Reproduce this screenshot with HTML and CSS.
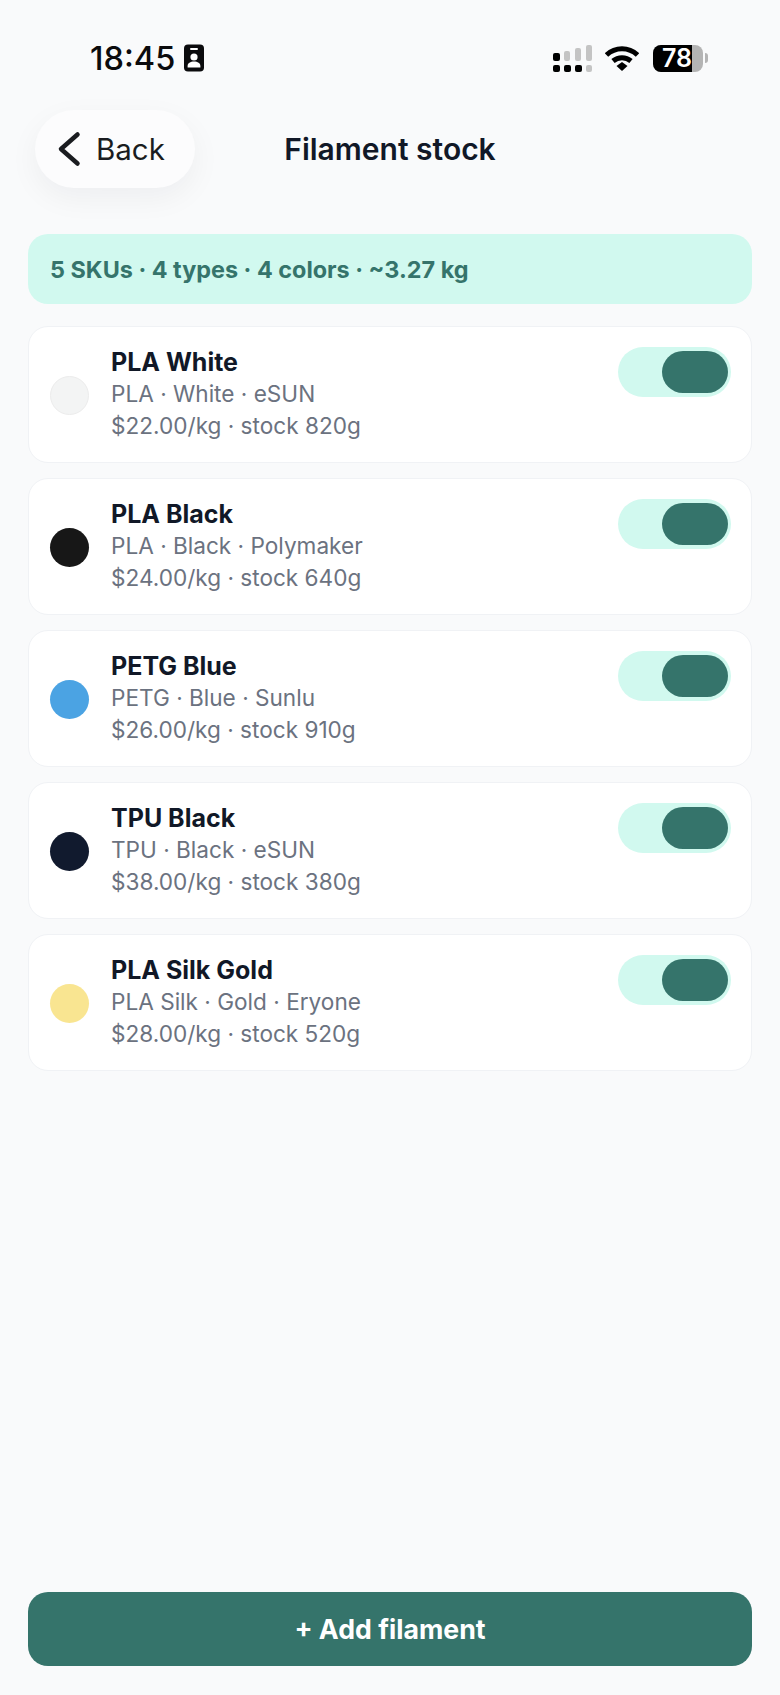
FILE: index.html
```html
<!DOCTYPE html>
<html lang="en">
<head>
    <meta charset="UTF-8">
    <meta name="viewport" content="width=device-width, initial-scale=1.0">
    <title>Filament stock</title>
    <link rel="stylesheet" href="styles.css">
</head>
<body>
    <div class="status-bar">
        <div class="status-left">
            <span class="time">18:45</span>
            <svg class="id-icon" width="20" height="27" viewBox="0 0 20 27"><rect width="20" height="27" rx="4" fill="#0b0b0d"/><rect x="6" y="3.500" width="8" height="2" rx="1" fill="#fff"/><circle cx="10" cy="12.500" r="3.600" fill="#fff"/><path d="M3.600 23v-1.600c0-2.800 2.800-4.400 6.400-4.400s6.400 1.600 6.400 4.400V23z" fill="#fff"/></svg>
        </div>
        <div class="status-right">
            <svg class="signal" width="39" height="27" viewBox="0 0 39 27"><rect x="0" y="8" width="7" height="8" rx="2" fill="#000"/><rect x="0" y="20" width="7" height="7" rx="2" fill="#000"/><rect x="11" y="6" width="6" height="10" rx="2" fill="#c4c4c4"/><rect x="11" y="20" width="7" height="7" rx="2" fill="#000"/><rect x="22" y="3" width="6" height="13" rx="2" fill="#c4c4c4"/><rect x="22" y="20" width="7" height="7" rx="2" fill="#000"/><rect x="33" y="0" width="6" height="16" rx="2" fill="#c4c4c4"/><rect x="33" y="20" width="6" height="7" rx="2" fill="#c4c4c4"/></svg>
            <svg class="wifi" width="34" height="26" viewBox="0 0 34 26"><path d="M1.500 10C10.300 1.700 23.700 1.700 32.500 10" fill="none" stroke="#000" stroke-width="5"/><path d="M8 16C13.200 11.500 20.800 11.500 26 16" fill="none" stroke="#000" stroke-width="5"/><path d="M11.500 21L17 17L22.500 21L17 26z" fill="#000"/></svg>
            <div class="battery">
                <div class="battery-body">
                    <span class="battery-fill"></span>
                    <span class="battery-num">78</span>
                </div>
                <span class="battery-cap"></span>
            </div>
        </div>
    </div>

    <div class="nav">
        <button class="back-btn">
            <svg width="24" height="36" viewBox="0 0 24 36"><path d="M20.500 3.500L4 18L20.500 32.500" fill="none" stroke="#1a1c20" stroke-width="4.500" stroke-linecap="round" stroke-linejoin="round"/></svg>
            <span>Back</span>
        </button>
        <h1 class="title">Filament stock</h1>
    </div>

    <div class="content">
        <div class="summary">5 SKUs · 4 types · 4 colors · ~3.27 kg</div>

        <div class="card">
            <span class="swatch swatch-white"></span>
            <div class="info">
                <div class="name">PLA White</div>
                <div class="meta">PLA · White · eSUN</div>
                <div class="meta">$22.00/kg · stock 820g</div>
            </div>
            <span class="toggle"><span class="knob"></span></span>
        </div>
        <div class="card">
            <span class="swatch swatch-black"></span>
            <div class="info">
                <div class="name">PLA Black</div>
                <div class="meta">PLA · Black · Polymaker</div>
                <div class="meta">$24.00/kg · stock 640g</div>
            </div>
            <span class="toggle"><span class="knob"></span></span>
        </div>
        <div class="card">
            <span class="swatch swatch-blue"></span>
            <div class="info">
                <div class="name">PETG Blue</div>
                <div class="meta">PETG · Blue · Sunlu</div>
                <div class="meta">$26.00/kg · stock 910g</div>
            </div>
            <span class="toggle"><span class="knob"></span></span>
        </div>
        <div class="card">
            <span class="swatch swatch-navy"></span>
            <div class="info">
                <div class="name">TPU Black</div>
                <div class="meta">TPU · Black · eSUN</div>
                <div class="meta">$38.00/kg · stock 380g</div>
            </div>
            <span class="toggle"><span class="knob"></span></span>
        </div>
        <div class="card">
            <span class="swatch swatch-gold"></span>
            <div class="info">
                <div class="name">PLA Silk Gold</div>
                <div class="meta">PLA Silk · Gold · Eryone</div>
                <div class="meta">$28.00/kg · stock 520g</div>
            </div>
            <span class="toggle"><span class="knob"></span></span>
        </div>
    </div>

    <button class="add-btn">+ Add filament</button>
</body>
</html>
```
FILE: styles.css
```css
*,
*::before,
*::after {
    box-sizing: border-box;
}

:root {
    --clr-bg: #f9fafb;
    --clr-dark: #111827;
    --clr-muted: #6b7280;
    --clr-primary: #35746b;
    --clr-mint: #d1f9ef;
    --clr-border: #f0f2f5;
}

body {
    display: flex;
    flex-direction: column;
    height: 1695px;
    margin: 0;
    background: var(--clr-bg);
    color: var(--clr-dark);
    font-family: "Inter", sans-serif;
    overflow: hidden;
}

/* status bar */
.status-bar {
    display: flex;
    justify-content: space-between;
    align-items: center;
    height: 58px;
    margin-top: 29px;
    padding: 0 72px 0 90px;
}

.status-left {
    display: flex;
    align-items: center;
    gap: 9px;
}

.time {
    font-size: 32.500px;
    font-weight: 500;
    color: #0b0b0d;
}

.id-icon {
    width: 20px;
    height: 28px;
}

.status-right {
    display: flex;
    align-items: center;
    gap: 14px;
}

.signal {
    margin-right: -1px;
}

.wifi {
    width: 34px;
    height: 26px;
}

.battery {
    display: flex;
    align-items: center;
    gap: 2px;
}

.battery-body {
    position: relative;
    display: flex;
    justify-content: flex-end;
    align-items: center;
    width: 50px;
    height: 27px;
    border-radius: 8px;
    background: #b4b4b4;
    overflow: hidden;
}

.battery-fill {
    position: absolute;
    top: 0;
    bottom: 0;
    left: 0;
    width: 78%;
    background: #000;
}

.battery-num {
    position: relative;
    color: #fff;
    font-size: 25px;
    font-weight: 600;
    margin-right: 11px;
}

.battery-cap {
    width: 3px;
    height: 10px;
    background: #b4b4b4;
    border-radius: 0 3px 3px 0;
}

/* nav */
.nav {
    position: relative;
    display: flex;
    align-items: center;
    justify-content: center;
    height: 78px;
    margin-top: 23px;
}

.back-btn {
    position: absolute;
    left: 35px;
    top: 0;
    display: flex;
    align-items: center;
    gap: 15px;
    width: 160px;
    height: 78px;
    padding: 0 0 0 22px;
    border: none;
    border-radius: 39px;
    background: #fcfcfd;
    box-shadow: 0 10px 30px rgba(17, 24, 39, 0.05);
    color: #1a1c20;
    font-family: inherit;
    font-size: 29.500px;
}

.title {
    margin: 0;
    font-size: 30px;
    font-weight: 600;
}

/* list */
.content {
    display: flex;
    flex-direction: column;
    gap: 15px;
    margin-top: 46px;
    padding: 0 28px;
}

.summary {
    display: flex;
    align-items: center;
    height: 70px;
    margin-bottom: 7px;
    padding: 0 22px;
    border-radius: 20px;
    background: var(--clr-mint);
    color: var(--clr-primary);
    font-size: 23.400px;
    font-weight: 700;
}

.card {
    display: flex;
    align-items: center;
    height: 137px;
    padding: 0 20px 1px 21px;
    border: 1px solid var(--clr-border);
    border-radius: 20px;
    background: #fff;
}

.swatch {
    flex: none;
    width: 39px;
    height: 39px;
    border-radius: 50%;
    margin-top: 2px;
}

.swatch-white {
    background: #f3f4f4;
    border: 1px solid #ececec;
}

.swatch-black {
    background: #171717;
}

.swatch-blue {
    background: #4ba3e3;
}

.swatch-navy {
    background: #111a2e;
}

.swatch-gold {
    background: #f9e591;
}

.info {
    flex: 1;
    margin-left: 22px;
}

.name {
    padding-top: 1px;
    font-size: 25px;
    font-weight: 700;
    line-height: 31px;
}

.meta {
    color: var(--clr-muted);
    font-size: 22.600px;
    line-height: 32px;
}

.toggle {
    display: flex;
    justify-content: flex-end;
    align-items: center;
    align-self: flex-start;
    width: 113px;
    height: 50px;
    margin-top: 20px;
    padding-right: 3px;
    border-radius: 25px;
    background: var(--clr-mint);
}

.knob {
    width: 66px;
    height: 42px;
    border-radius: 21px;
    background: var(--clr-primary);
}

.add-btn {
    height: 74px;
    margin: auto 28px 29px;
    border: none;
    border-radius: 20px;
    background: var(--clr-primary);
    color: #fff;
    font-family: inherit;
    font-size: 26.700px;
    font-weight: 700;
}
```
